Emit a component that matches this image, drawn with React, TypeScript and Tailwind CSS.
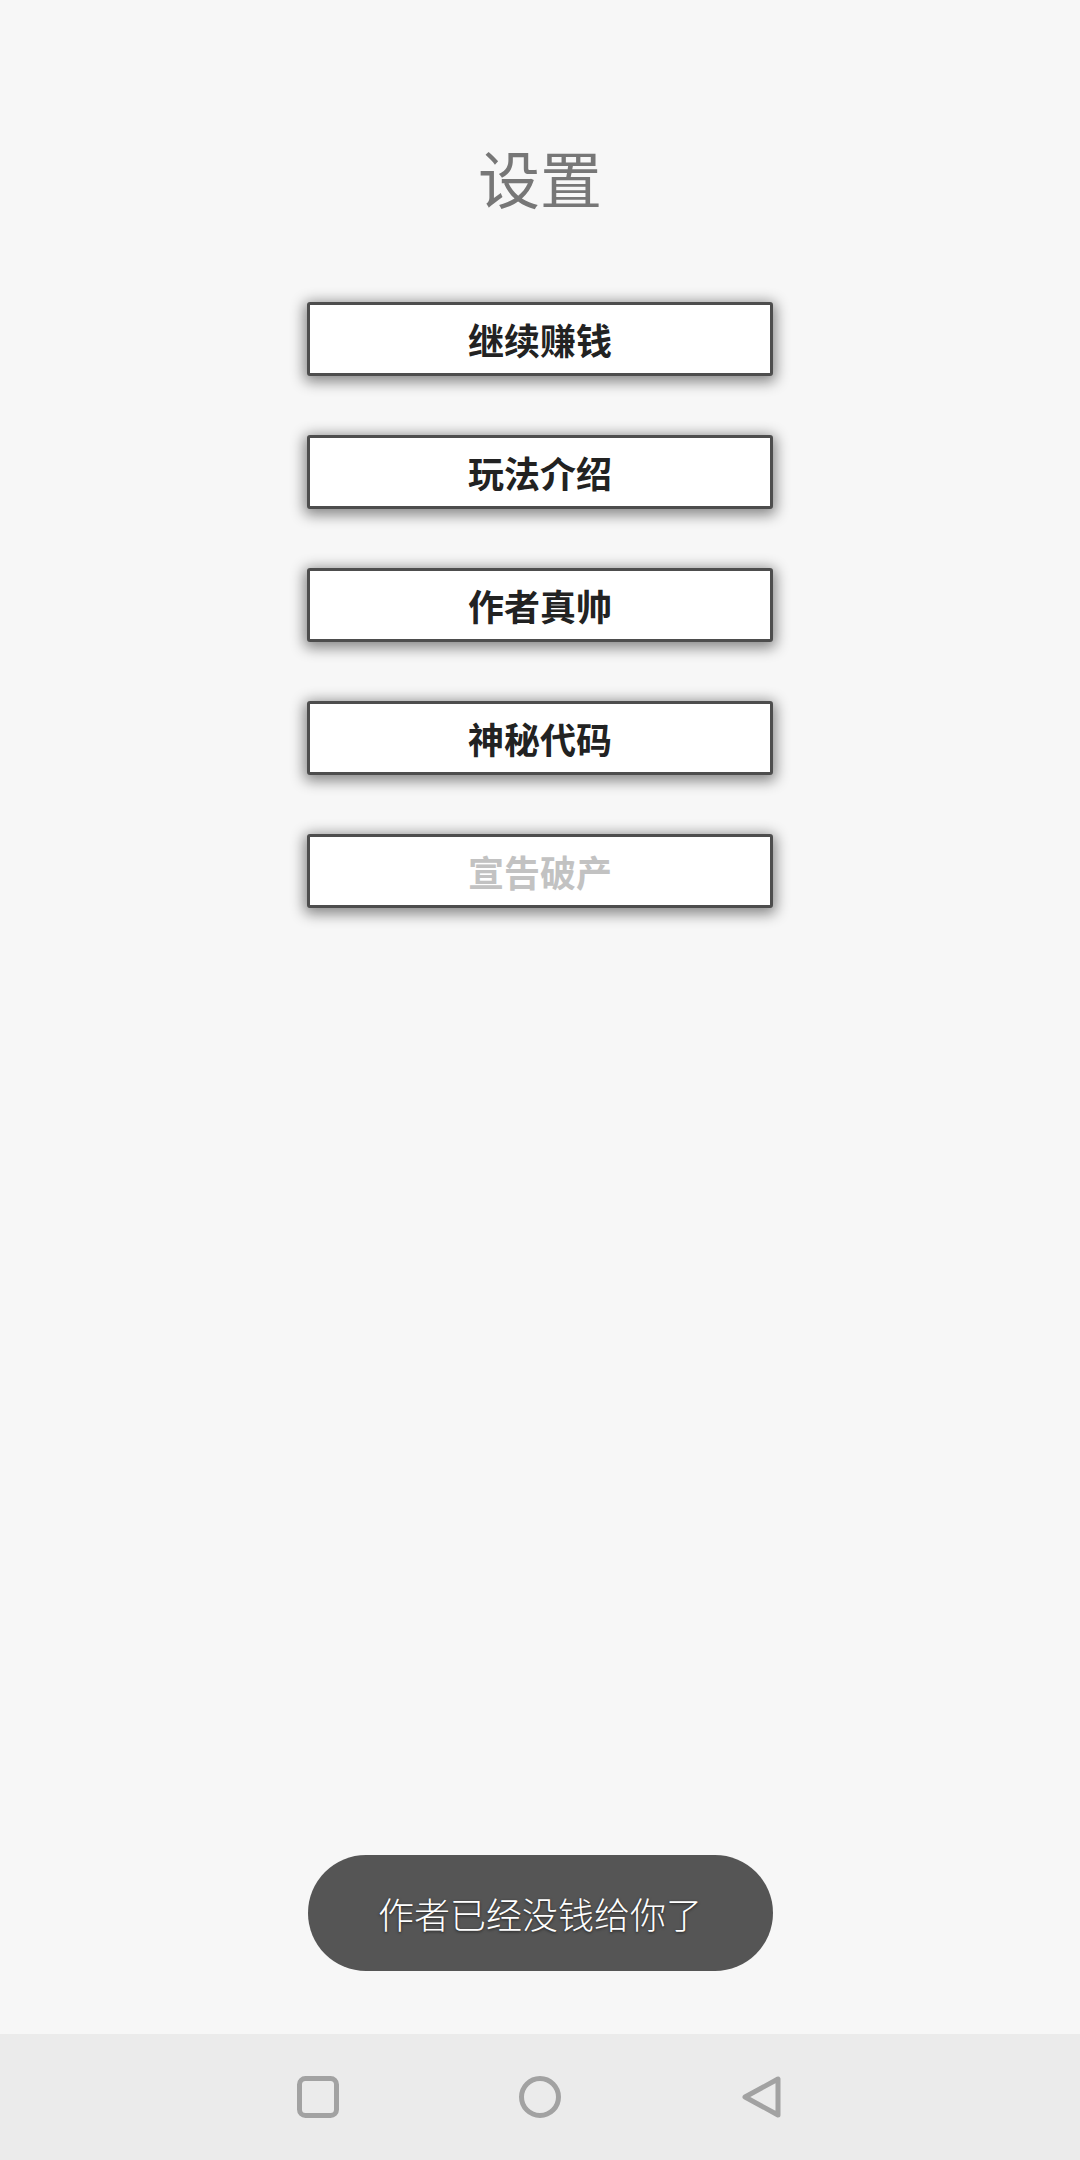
import React from 'react';

const buttons = [
  { label: '继续赚钱', disabled: false },
  { label: '玩法介绍', disabled: false },
  { label: '作者真帅', disabled: false },
  { label: '神秘代码', disabled: false },
  { label: '宣告破产', disabled: true },
];

const font = { fontFamily: '"Noto Sans CJK SC", "Noto Sans", sans-serif' };

const NavBar = () => (
  <div className="h-[126px] bg-[#ebebeb] flex items-center justify-center gap-[174px] shrink-0">
    <svg width="48" height="48" viewBox="0 0 48 48">
      <rect x="5.5" y="5.5" width="37" height="37" rx="6" fill="none" stroke="#a2a2a2" strokeWidth="5" />
    </svg>
    <svg width="48" height="48" viewBox="0 0 48 48">
      <circle cx="24" cy="24" r="18.5" fill="none" stroke="#a2a2a2" strokeWidth="5" />
    </svg>
    <svg width="48" height="48" viewBox="0 0 48 48">
      <path d="M7 24 L40 6 L40 42 Z" fill="none" stroke="#a2a2a2" strokeWidth="5" strokeLinejoin="round" />
    </svg>
  </div>
);

const App = () => {
  return (
    <div className="w-[1080px] h-[2160px] bg-[#f7f7f7] flex flex-col" style={font}>
      <div className="flex-1 flex flex-col items-center">
        <h1 className="mt-[146px] text-[62px] leading-[62px] text-[#777777] font-normal">设置</h1>

        <div className="mt-[94px] flex flex-col gap-[59px]">
          {buttons.map((b) => (
            <button
              key={b.label}
              className={
                'w-[466px] h-[74px] bg-white border-[3px] border-[#4d4d4d] rounded-[3px] shadow-[0_3px_14px_3px_rgba(0,0,0,0.45)] text-[36px] font-bold leading-none flex items-center justify-center ' +
                (b.disabled ? 'text-[#c2c2c2]' : 'text-[#222222]')
              }
            >
              {b.label}
            </button>
          ))}
        </div>

        <div className="mt-auto mb-[63px] w-[465px] h-[116px] rounded-full bg-[#555555] flex items-center justify-center">
          <span className="text-[36px] font-light text-white leading-none [text-shadow:0_1px_3px_rgba(0,0,0,0.6)]">
            作者已经没钱给你了
          </span>
        </div>
      </div>
      <NavBar />
    </div>
  );
};

export default App;
